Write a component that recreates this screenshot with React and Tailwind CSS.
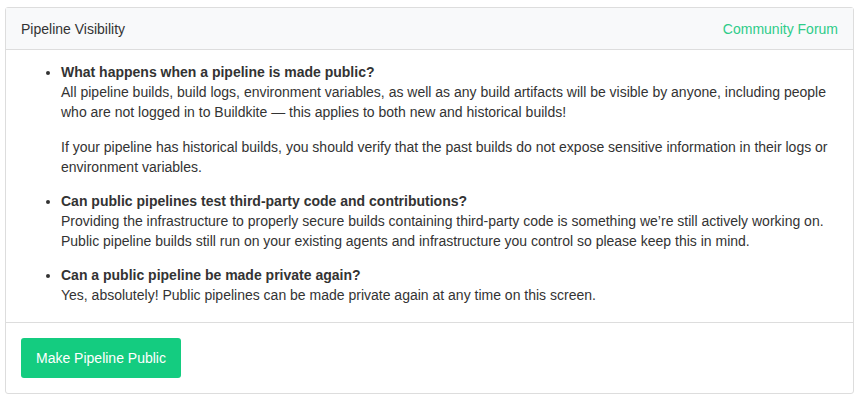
export default function App() {
  return (
    <div className="bg-white pt-[7px] pb-[8px] pl-[5px] pr-[7px] font-['Liberation_Sans',Arial,sans-serif] text-[14px] leading-5 text-[#333]">
      <div className="rounded-[3px] border border-[#ddd]">
        <div className="flex h-[42px] items-center justify-between border-b border-[#ddd] bg-[#f8f9fa] px-[15px]">
          <span>Pipeline Visibility</span>
          <a href="#" className="text-[#2ecc89]">Community Forum</a>
        </div>

        <div className="px-[15px] pt-[12px] pb-[17px]">
          <ul className="list-disc pl-[40px] flex flex-col gap-[14px]">
            <li>
              <strong className="font-bold">What happens when a pipeline is made public?</strong>
              <br />
              All pipeline builds, build logs, environment variables, as well as any build artifacts will be visible by anyone, including people who are not logged in to Buildkite — this applies to both new and historical builds!
              <p className="mt-[15px]">
                If your pipeline has historical builds, you should verify that the past builds do not expose sensitive information in their logs or environment variables.
              </p>
            </li>
            <li>
              <strong className="font-bold">Can public pipelines test third-party code and contributions?</strong>
              <br />
              Providing the infrastructure to properly secure builds containing third-party code is something we’re still actively working on. Public pipeline builds still run on your existing agents and infrastructure you control so please keep this in mind.
            </li>
            <li>
              <strong className="font-bold">Can a public pipeline be made private again?</strong>
              <br />
              Yes, absolutely! Public pipelines can be made private again at any time on this screen.
            </li>
          </ul>
        </div>

        <div className="border-t border-[#ddd] p-[15px]">
          <button className="h-[40px] rounded-[3px] bg-[#14cc80] px-[15px] text-white">
            Make Pipeline Public
          </button>
        </div>
      </div>
    </div>
  );
}
